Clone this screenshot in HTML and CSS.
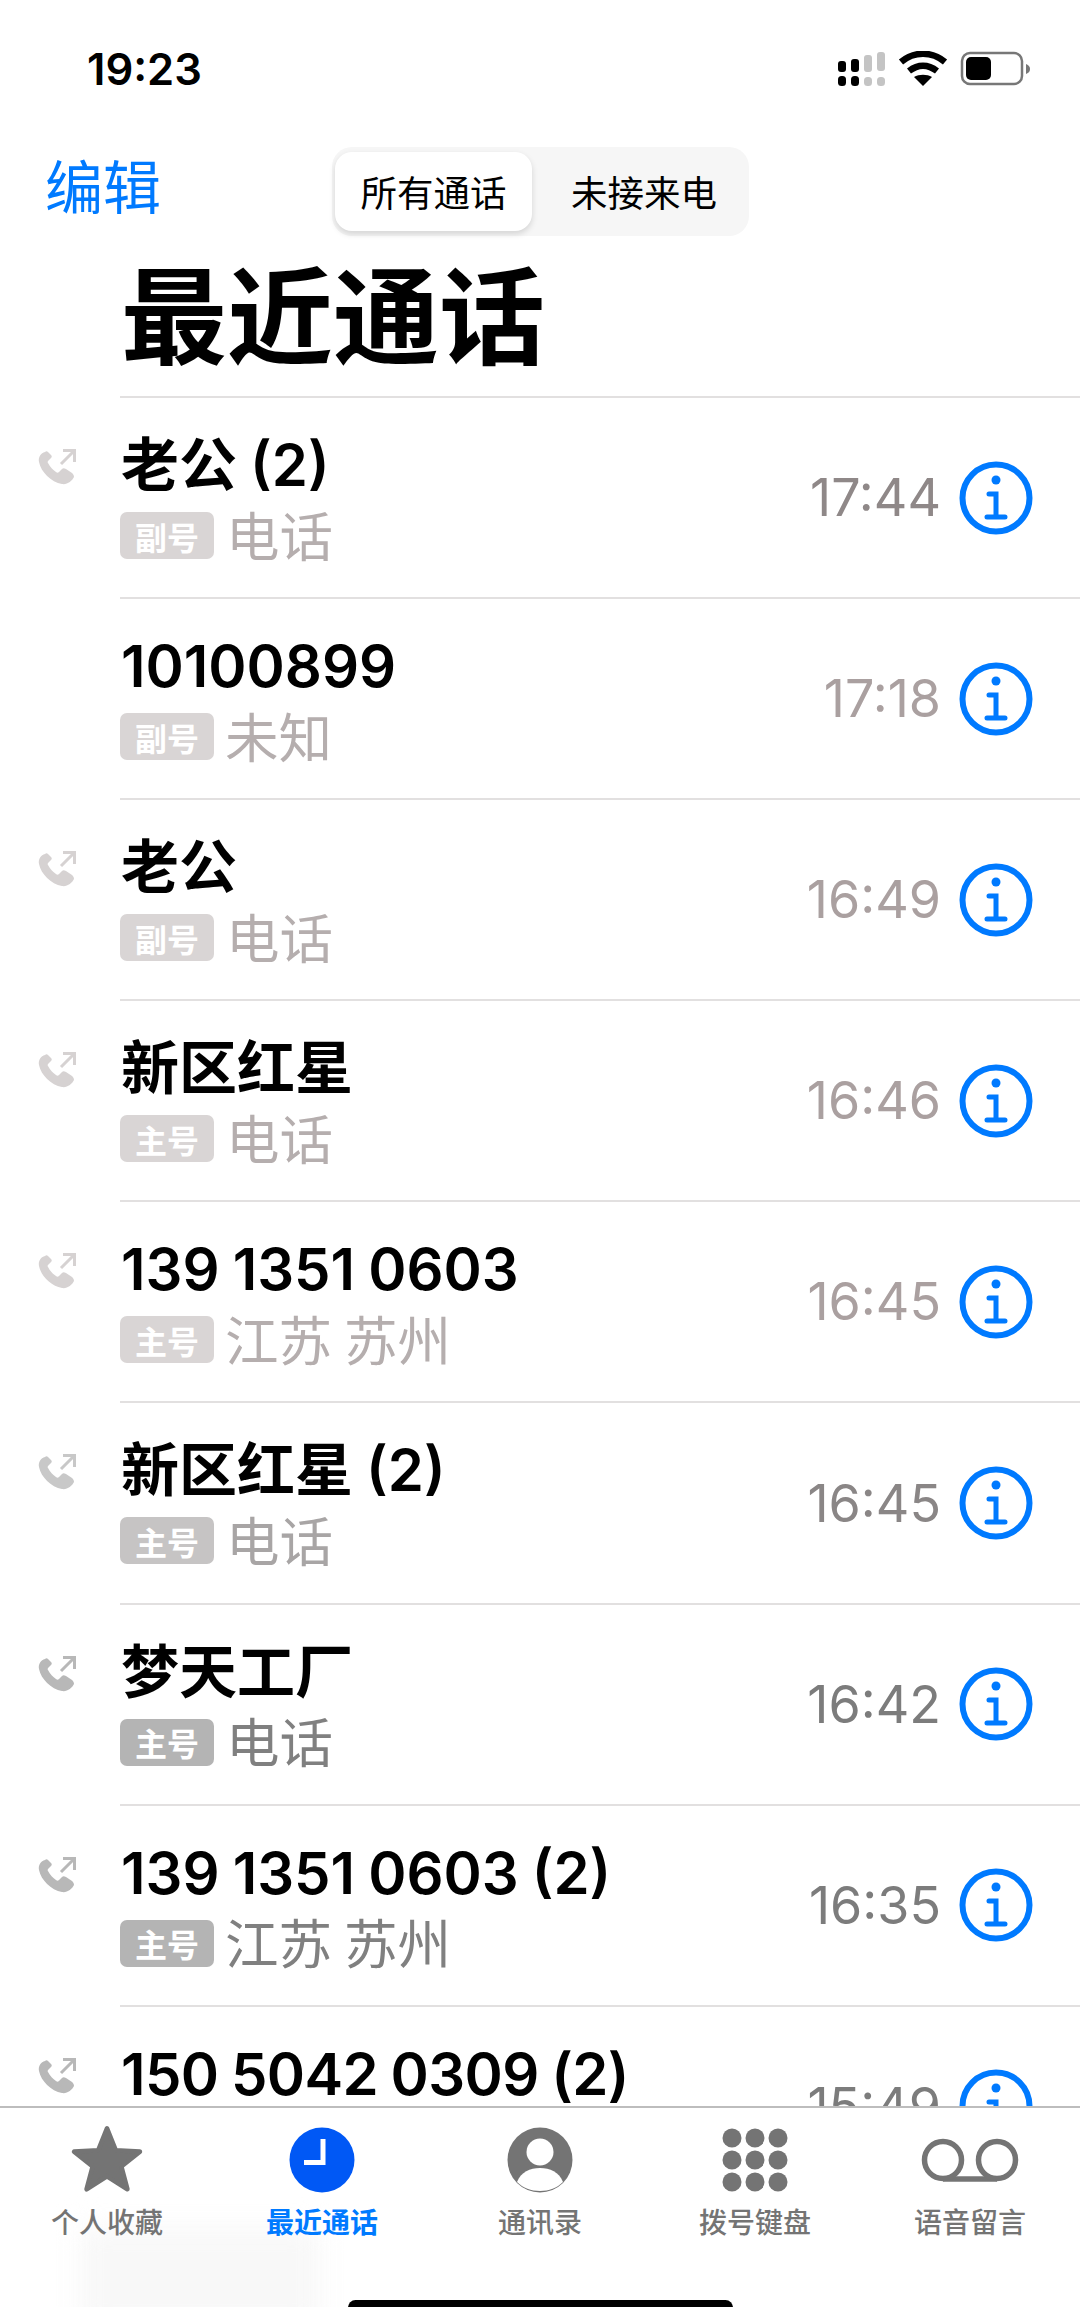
FILE: index.html
```html
<!DOCTYPE html>
<html lang="zh">
<head>
	<meta charset="UTF-8">
	<title>最近通话</title>
	<link rel="stylesheet" href="styles.css">
</head>
<body>
	<svg class="defs" width="0" height="0">
		<symbol id="ic-phone" viewBox="0 0 40 38">
			<path fill="currentColor" d="M8 4C4 5 1 9 2 14c2 10 12 20 23 22 5 1 10-3 12-7 0-2-1-3-2-4l-6-4c-2-1-3-1-4 0l-3 3c-1 1-2 1-3 0-3-2-6-5-8-9-1-1 0-2 1-3l2-2c1-1 1-2 0-3L11 4c-1-1-2-1-3 0z"/>
			<path fill="none" stroke="currentColor" stroke-width="3" d="M24 16L37 3M26 2.500h11.500V14"/>
		</symbol>
		<symbol id="ic-info" viewBox="0 0 74 74">
			<circle cx="37" cy="37" r="33.500" fill="none" stroke="currentColor" stroke-width="6"/>
			<circle cx="37" cy="19" r="4.500" fill="currentColor"/>
			<path fill="none" stroke="currentColor" stroke-width="5" stroke-linecap="round" d="M30 33h7v23M28 56h18"/>
		</symbol>
	</svg>

	<div id="screen">
		<div class="status">
			<span class="clock">19:23</span>
			<svg class="status-icons" width="196" height="36" viewBox="0 0 196 36">
				<g fill="#000">
					<rect x="1" y="10" width="8" height="11" rx="3"/>
					<rect x="14" y="8" width="8" height="13" rx="3"/>
					<rect x="1" y="25" width="8" height="10" rx="3.500"/>
					<rect x="14" y="25" width="8" height="10" rx="3.500"/>
				</g>
				<g fill="#c4c4c4">
					<rect x="27" y="4" width="8" height="17" rx="3"/>
					<rect x="40" y="1" width="8" height="19" rx="3"/>
					<rect x="27" y="26" width="8" height="9" rx="3.500"/>
					<rect x="40" y="26" width="8" height="9" rx="3.500"/>
				</g>
				<path fill="none" stroke="#000" stroke-width="6.500" d="M64 11c13-11 31-11 44 0M72 20c9-7 19-7 28 0"/>
				<path fill="#000" d="M77 26c5-3 13-3 18 0l-9 9z"/>
				<rect x="125" y="2" width="60" height="31" rx="8" fill="none" stroke="#777" stroke-width="2.500"/>
				<rect x="129" y="6" width="25" height="23" rx="5" fill="#000"/>
				<path fill="#777" d="M189 13c3 1 4 3 4 5s-1 4-4 5z"/>
			</svg>
		</div>

		<div class="nav">
			<a class="edit">编辑</a>
			<div class="segment">
				<span class="seg-item active">所有通话</span>
				<span class="seg-item">未接来电</span>
			</div>
		</div>

		<h1 class="title">最近通话</h1>

		<div class="list">
			<div class="row tone-a">
				<div class="row-icon"><svg class="phone"><use href="#ic-phone"/></svg></div>
				<div class="row-body">
					<div class="row-text">
						<div class="name">老公 (2)</div>
						<div class="sub"><span class="badge">副号</span>电话</div>
					</div>
					<span class="time">17:44</span>
					<svg class="info"><use href="#ic-info"/></svg>
				</div>
			</div>
			<div class="row tone-b">
				<div class="row-icon"></div>
				<div class="row-body">
					<div class="row-text">
						<div class="name">10100899</div>
						<div class="sub"><span class="badge">副号</span><span class="sub-tight">未知</span></div>
					</div>
					<span class="time">17:18</span>
					<svg class="info"><use href="#ic-info"/></svg>
				</div>
			</div>
			<div class="row tone-b">
				<div class="row-icon"><svg class="phone"><use href="#ic-phone"/></svg></div>
				<div class="row-body">
					<div class="row-text">
						<div class="name">老公</div>
						<div class="sub"><span class="badge">副号</span>电话</div>
					</div>
					<span class="time">16:49</span>
					<svg class="info"><use href="#ic-info"/></svg>
				</div>
			</div>
			<div class="row tone-b">
				<div class="row-icon"><svg class="phone"><use href="#ic-phone"/></svg></div>
				<div class="row-body">
					<div class="row-text">
						<div class="name">新区红星</div>
						<div class="sub"><span class="badge">主号</span>电话</div>
					</div>
					<span class="time">16:46</span>
					<svg class="info"><use href="#ic-info"/></svg>
				</div>
			</div>
			<div class="row tone-b">
				<div class="row-icon"><svg class="phone"><use href="#ic-phone"/></svg></div>
				<div class="row-body">
					<div class="row-text">
						<div class="name">139 1351 0603</div>
						<div class="sub"><span class="badge">主号</span><span class="sub-tight">江苏 苏州</span></div>
					</div>
					<span class="time">16:45</span>
					<svg class="info"><use href="#ic-info"/></svg>
				</div>
			</div>
			<div class="row tone-c">
				<div class="row-icon"><svg class="phone"><use href="#ic-phone"/></svg></div>
				<div class="row-body">
					<div class="row-text">
						<div class="name">新区红星 (2)</div>
						<div class="sub"><span class="badge">主号</span>电话</div>
					</div>
					<span class="time">16:45</span>
					<svg class="info"><use href="#ic-info"/></svg>
				</div>
			</div>
			<div class="row tone-d">
				<div class="row-icon"><svg class="phone"><use href="#ic-phone"/></svg></div>
				<div class="row-body">
					<div class="row-text">
						<div class="name">梦天工厂</div>
						<div class="sub"><span class="badge">主号</span>电话</div>
					</div>
					<span class="time">16:42</span>
					<svg class="info"><use href="#ic-info"/></svg>
				</div>
			</div>
			<div class="row tone-d">
				<div class="row-icon"><svg class="phone"><use href="#ic-phone"/></svg></div>
				<div class="row-body">
					<div class="row-text">
						<div class="name">139 1351 0603 (2)</div>
						<div class="sub"><span class="badge">主号</span><span class="sub-tight">江苏 苏州</span></div>
					</div>
					<span class="time">16:35</span>
					<svg class="info"><use href="#ic-info"/></svg>
				</div>
			</div>
			<div class="row tone-d">
				<div class="row-icon"><svg class="phone"><use href="#ic-phone"/></svg></div>
				<div class="row-body">
					<div class="row-text">
						<div class="name name-tight">150 5042 0309 (2)</div>
					</div>
					<span class="time">15:49</span>
					<svg class="info"><use href="#ic-info"/></svg>
				</div>
			</div>
		</div>

		<div class="tabbar">
			<div class="smudge"></div>
			<div class="tab">
				<svg class="tab-icon" viewBox="-3 -1 82 82"><path fill="#747474" stroke="#747474" stroke-width="5" stroke-linejoin="round" d="M38 6l9.500 23.500 26 1.500-20 16 6.500 24.500L38 57.500 16 71.500 22.500 47l-20-16 26-1.500z"/></svg>
				<span class="tab-label">个人收藏</span>
			</div>
			<div class="tab active">
				<svg class="tab-icon" viewBox="0 0 76 76"><circle cx="38" cy="38" r="32.500" fill="#0058f5"/><path fill="none" stroke="#fff" stroke-width="5" d="M39 17v23.500H20"/></svg>
				<span class="tab-label">最近通话</span>
			</div>
			<div class="tab">
				<svg class="tab-icon" viewBox="0 0 76 76"><circle cx="38" cy="38" r="32.500" fill="#747474"/><circle cx="38" cy="30" r="13.500" fill="#fff"/><path fill="#fff" d="M15 60c4-10 13-14 23-14s19 4 23 14c-6 6-14 9-23 9s-17-3-23-9z"/></svg>
				<span class="tab-label">通讯录</span>
			</div>
			<div class="tab">
				<svg class="tab-icon" viewBox="0 0 76 76" fill="#747474">
					<circle cx="15" cy="16" r="9.500"/><circle cx="38" cy="16" r="9.500"/><circle cx="61" cy="16" r="9.500"/>
					<circle cx="15" cy="38" r="9.500"/><circle cx="38" cy="38" r="9.500"/><circle cx="61" cy="38" r="9.500"/>
					<circle cx="15" cy="60" r="9.500"/><circle cx="38" cy="60" r="9.500"/><circle cx="61" cy="60" r="9.500"/>
				</svg>
				<span class="tab-label">拨号键盘</span>
			</div>
			<div class="tab">
				<svg class="tab-icon wide" viewBox="0 0 100 76"><path fill="none" stroke="#747474" stroke-width="5.500" d="M23 57h54"/><circle cx="23" cy="38" r="18.500" fill="none" stroke="#747474" stroke-width="5.500"/><circle cx="77" cy="38" r="18.500" fill="none" stroke="#747474" stroke-width="5.500"/></svg>
				<span class="tab-label">语音留言</span>
			</div>
			<div class="home-bar"></div>
		</div>
	</div>
</body>
</html>
```

FILE: styles.css
```css
*
{
	box-sizing: border-box;
}

body
{
	margin: 0;
	background: #fff;
	font-family: "Inter", "Noto Sans CJK SC", sans-serif;
	color: #000;
}

.defs
{
	display: block;
	height: 0;
}

#screen
{
	display: flex;
	flex-direction: column;
	width: 1080px;
	height: 2307px;
	overflow: hidden;
	position: relative;
}

/* status bar */

.status
{
	display: flex;
	justify-content: space-between;
	align-items: center;
	height: 50px;
	margin-top: 44px;
	padding: 0 47px 0 87px;
	flex-shrink: 0;
}

.clock
{
	font-size: 43.5px;
	font-weight: 600;
}

/* nav */

.nav
{
	display: flex;
	align-items: center;
	height: 89px;
	margin-top: 53px;
	flex-shrink: 0;
}

.edit
{
	width: 332px;
	margin-bottom: 16px;
	padding-left: 45px;
	font-size: 58px;
	color: #007aff;
	font-family: "Noto Sans CJK SC", sans-serif;
}

.segment
{
	display: flex;
	width: 417px;
	height: 89px;
	padding: 5px 3px;
	background: #f6f6f6;
	border-radius: 20px;
}

.seg-item
{
	display: flex;
	flex: 1;
	align-items: center;
	justify-content: center;
	padding-left: 10px;
	font-size: 36.5px;
	font-family: "Noto Sans CJK SC", sans-serif;
}

.seg-item.active
{
	flex: none;
	width: 197px;
	padding-left: 0;
	background: #fff;
	border-radius: 17px;
	box-shadow: 0 3px 6px rgba(0, 0, 0, 0.14);
}

.title
{
	margin: 4px 0 0;
	padding-left: 121px;
	height: 156px;
	line-height: 140px;
	font-size: 106px;
	font-weight: 700;
	font-family: "Noto Sans CJK SC", sans-serif;
	flex-shrink: 0;
}

/* list */

.list
{
	flex: 1;
	min-height: 0;
	overflow: hidden;
}

.row
{
	display: flex;
	height: 201.1px;
}

.row-icon
{
	width: 120px;
	padding: 52px 0 0 37px;
	flex-shrink: 0;
}

.phone
{
	display: block;
	width: 40px;
	height: 38px;
}

.row-body
{
	display: flex;
	flex: 1;
	align-items: center;
	padding-right: 47px;
	border-top: 2px solid #e2e0e0;
}

.row-text
{
	flex: 1;
	align-self: flex-start;
	padding-top: 29px;
}

.name
{
	height: 75px;
	line-height: 76px;
	padding-left: 1px;
	font-size: 58px;
	font-weight: 600;
	word-spacing: -1.5px;
	white-space: nowrap;
}

.name-tight
{
	letter-spacing: -0.6px;
}

.sub
{
	display: flex;
	align-items: center;
	height: 62px;
	font-size: 53.5px;
	font-family: "Noto Sans CJK SC", sans-serif;
	font-weight: 400;
	white-space: nowrap;
}

.sub-tight
{
	margin-left: -1px;
}

.badge
{
	display: flex;
	align-items: center;
	justify-content: center;
	width: 94px;
	height: 47px;
	margin: 5px 12px 0 0;
	border-radius: 7px;
	font-size: 32px;
	font-weight: 700;
	color: #fff;
}

.time
{
	margin-right: 18px;
	font-size: 52px;
	font-weight: 400;
}

.info
{
	width: 74px;
	height: 74px;
	color: #007aff;
	flex-shrink: 0;
}

/* the screenshot fades towards the top, so rows differ in grey */

.tone-a .phone, .tone-b .phone { color: #d6d2d2; }
.tone-a .badge, .tone-b .badge { background: #d9d5d5; }
.tone-a .sub, .tone-b .sub { color: #b5aeae; }
.tone-a .sub .badge, .tone-b .sub .badge { color: #fff; }
.tone-a .time { color: #8f8888; }
.tone-b .time { color: #aaa0a0; }

.tone-c .phone { color: #c8c8c8; }
.tone-c .badge { background: #c6c4c4; }
.tone-c .sub { color: #a8a5a5; }
.tone-c .time { color: #8a8686; }

.tone-d .phone { color: #b8b8b8; }
.tone-d .badge { background: #b4b4b4; }
.tone-d .sub { color: #808080; }
.tone-d .time { color: #7c7c7c; }

/* tab bar */

.tabbar
{
	display: grid;
	grid-template-columns: 214px 216px 220px 210px 220px;
	height: 201px;
	padding-top: 14px;
	background: #fff;
	border-top: 2px solid #bdbdbd;
	flex-shrink: 0;
	position: relative;
	overflow: hidden;
}

.tab
{
	display: flex;
	flex-direction: column;
	align-items: center;
	position: relative;
}

.tab-icon
{
	width: 76px;
	height: 76px;
}

.tab-icon.wide
{
	width: 100px;
}

.tab-label
{
	margin-top: 3px;
	font-size: 28px;
	font-weight: 500;
	color: #747474;
	font-family: "Noto Sans CJK SC", sans-serif;
}

.tab.active .tab-label
{
	color: #007aff;
	font-weight: 700;
}

.smudge
{
	position: absolute;
	left: 80px;
	top: 120px;
	width: 240px;
	height: 100px;
	background: #f8f8f8;
	filter: blur(14px);
}

.home-bar
{
	position: absolute;
	left: 348px;
	bottom: -8px;
	width: 385px;
	height: 15px;
	background: #000;
	border-radius: 8px;
}
```
